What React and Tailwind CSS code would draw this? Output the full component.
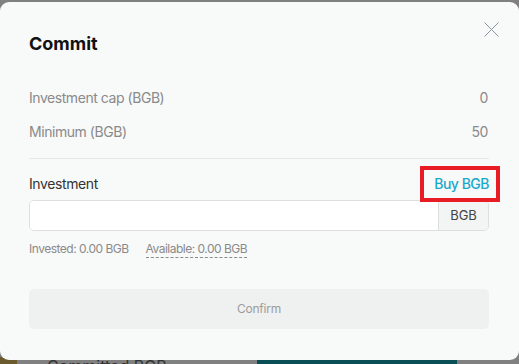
import React from "react";

export default function App() {
  return (
    <div className="w-[519px] h-[364px] overflow-hidden bg-[#808080] pt-[2px]" style={{ fontFamily: "Inter, 'Noto Sans', sans-serif" }}>
      <div className="relative h-[358px] rounded-[9px] bg-[#f8f9f9] pl-[29px] pr-[30px] pt-[30px] z-10">
        <button className="absolute right-[20px] top-[20px] w-[15px] h-[15px] text-[#8a93a3]">
          <svg width="15" height="15" viewBox="0 0 15 15" fill="none" stroke="currentColor" strokeWidth="1">
            <path d="M0.5 0.5 L14.5 14.5 M14.5 0.5 L0.5 14.5" />
          </svg>
        </button>
        <h2 className="text-[18px] leading-[24px] font-bold text-[#111]">Commit</h2>
        <div className="mt-[24px] flex flex-col">
          <div className="h-[34px] flex items-center justify-between text-[14px] tracking-[-0.45px] text-[#8a8a8a]">
            <span>Investment cap (BGB)</span>
            <span className="pr-[1px]">0</span>
          </div>
          <div className="h-[34px] flex items-center justify-between text-[14px] tracking-[-0.45px] text-[#8a8a8a]">
            <span>Minimum (BGB)</span>
            <span className="pr-[1px]">50</span>
          </div>
        </div>
        <div className="mt-[10px] h-px bg-[#e6e8e8]" />
        <div className="mt-[8px] h-[33px] flex items-center justify-between text-[14px] tracking-[-0.4px]">
          <span className="text-[#333]">Investment</span>
          <span className="relative font-medium text-[#1aa8ca] leading-[20px] tracking-[-0.5px]">
            Buy BGB
            <span className="absolute top-[-8px] bottom-[-8px] left-[-14px] right-[-11px] border-4 border-[#e81c24]" />
          </span>
        </div>
        <div className="flex h-[31px] rounded-[5px] border border-[#dcdedf] bg-white overflow-hidden">
          <input className="flex-1 min-w-0 outline-none px-3 text-[14px] bg-white" />
          <div className="w-[50px] flex items-center justify-center bg-[#f3f4f4] border-l border-[#dcdedf] text-[13px] text-[#444]">BGB</div>
        </div>
        <div className="mt-[10px] flex items-start gap-[17px] text-[12px] leading-[16px] text-[#8a8a8a] tracking-[-0.5px]">
          <span>Invested: 0.00 BGB</span>
          <span className="border-b border-dashed border-[#8a8a8a]">Available: 0.00 BGB</span>
        </div>
        <button className="mt-[31px] w-full h-[40px] rounded-[5px] bg-[#eff0f0] text-[12px] tracking-[-0.2px] text-[#9c9c9c]">Confirm</button>
      </div>
      <div className="flex h-[10px] items-start">
        <div className="w-[17px] h-[10px] mt-[-3px] bg-[#6b5a2e]" />
        <span className="ml-[30px] mt-[-4px] text-[16px] leading-[20px] text-[#333]">Committed BGB</span>
        <div className="ml-auto mr-[62px] w-[200px] h-[10px] bg-[#0a4f55]" />
      </div>
    </div>
  );
}
